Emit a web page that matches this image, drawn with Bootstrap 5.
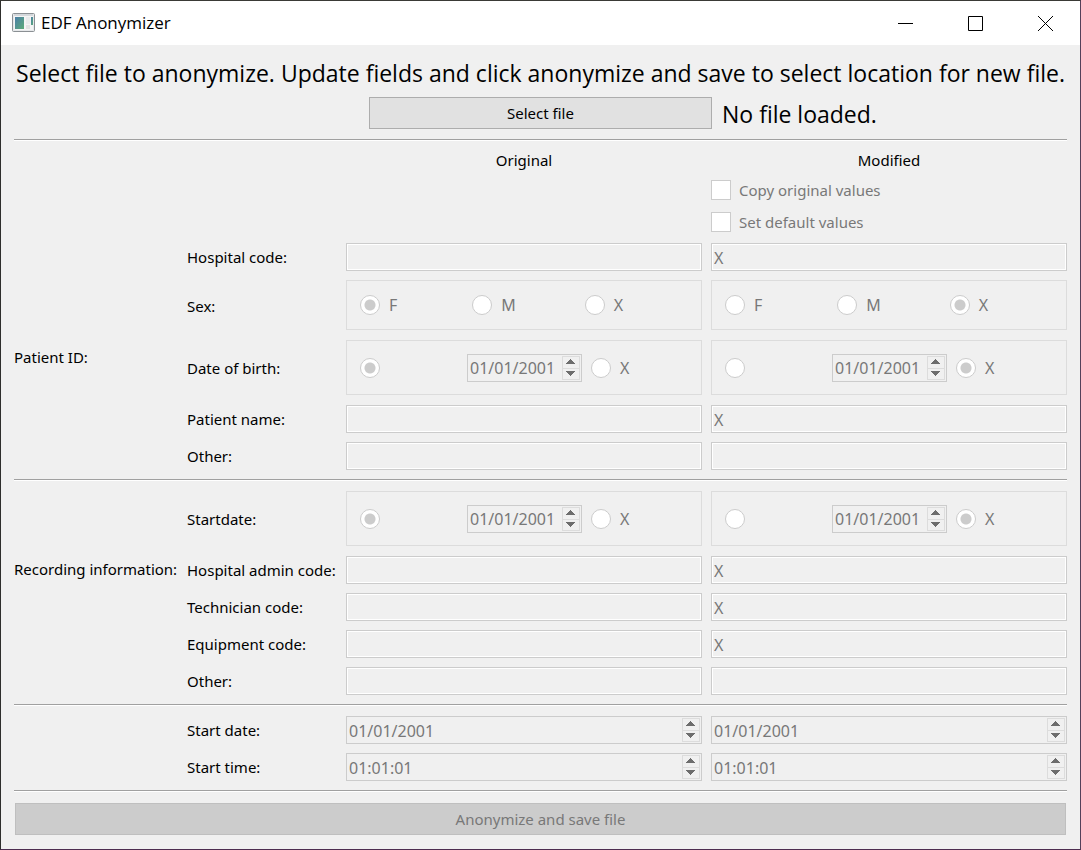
<!DOCTYPE html>
<html lang="en">
<head>
<meta charset="utf-8">
<meta name="viewport" content="width=device-width, initial-scale=1">
<title>EDF Anonymizer</title>
<link href="https://cdn.jsdelivr.net/npm/bootstrap@5.3.0/dist/css/bootstrap.min.css" rel="stylesheet">
<style>
  body { font: 15px/20px "Noto Sans", sans-serif; color: #000; background: #f0f0f0; }
  .app-window { border: 1px solid; border-color: #3a3a36 #54405a #4d2d50 #2e2e2c; }
  .title-bar { height: 44px; background: #fff; padding-left: 11px; }
  .title-text { font: 17px/24px "Open Sans", sans-serif; padding-left: 6px; }
  .win-btn { width: 70px; height: 44px; border: 0; padding: 0 0 2px; background: transparent; }
  .app-body { padding: 10px 13px 14px; }
  .intro { font: 23px/36px "Open Sans", sans-serif; margin-bottom: 6px; white-space: nowrap; }
  .file-state { font: 23px/34px "Open Sans", sans-serif; height: 32px; }
  .file-row { display: grid; grid-template-columns: repeat(3, 1fr); column-gap: 9px; margin-bottom: 10px; }
  .push-btn { height: 32px; padding: 0; border: 1px solid #adadad; border-radius: 0; background: #e1e1e1; color: #000; font-size: 15px; line-height: 20px; margin: 0 1px; }
  .save-row { padding-top: 11px; display: grid; }
  .push-btn:disabled { background: #ccc; border-color: #bfbfbf; color: #787878; opacity: 1; }
  .divider { height: 2px; margin: 0; border: 0; border-top: 1px solid #a0a0a0; background: #fff; opacity: 1; }
  .form-grid { display: grid; grid-template-columns: 164px 150px minmax(0, 1fr) minmax(0, 1fr); gap: 9px; align-items: center; padding: 10px 0 9px; white-space: nowrap; }
  .form-grid > .section-name { grid-column: 1; grid-row: 1 / span 5; }
  .form-grid > .patient-name { grid-row: 4 / span 5; }
  .form-grid > .recording-name { grid-row: 1 / span 4; padding-bottom: 12px; }
  .form-grid > .field-name { grid-column: 2; }
  .col-title { height: 19px; line-height: 19px; text-align: center; }
  .col-title.first { grid-column: 3; }
  .tick-row { grid-column: 4; height: 23px; padding-bottom: 2px; }
  .text-field { height: 28px; width: 100%; min-width: 0; border: 1px solid #ccc; border-radius: 0; box-shadow: inset 0 0 0 1px #fff; background: #f0f0f0; color: #787878; padding: 1px 2px 0; font-size: 16px; line-height: 22px; }
  .option-box { border: 1px solid #dcdcdc; margin-bottom: 1px; padding: 0 12px 0 13px; display: grid; align-items: center; }
  .sex-box { height: 50px; grid-template-columns: repeat(3, 1fr); padding-right: 4px; }
  .date-box { height: 55px; grid-template-columns: 1fr 115px 1fr; column-gap: 9px; }
  .mark-input { appearance: none; flex: none; width: 20px; height: 20px; margin: 0; border: 1px solid #ccc; background: #fff; }
  .mark-input[type=radio] { border-radius: 50%; }
  .mark-input[type=radio]:checked { background: radial-gradient(circle, #ccc 4px, #ccc 5px, #fff 6px); }
  .option-label { display: flex; align-items: center; gap: 9px; color: #787878; }
  .option-box .option-label { font-size: 16px; }
  .tick-row .option-label { gap: 8px; }
  .spin-field { display: flex; height: 28px; border: 1px solid #ccc; padding: 1px; }
  .spin-field input { flex: 1; min-width: 0; border: 0; background: transparent; color: #787878; padding: 1px 0 0 1px; font-size: 16px; line-height: 22px; }
  .spin-keys { display: flex; flex-direction: column; width: 18px; border: 1px solid #dcdcdc; }
  .spin-keys button { flex: 1; display: flex; align-items: center; justify-content: flex-start; border: 0; padding: 0 0 2px 3px; background: transparent; min-height: 0; }
  .spin-keys button + button { border-top: 1px solid #dcdcdc; padding-bottom: 1px; }
  .spin-keys svg { display: block; fill: #6d6d6d; }
</style>
</head>
<body>
<svg class="d-none" aria-hidden="true">
  <symbol id="up" viewBox="0 0 9 5"><path d="M4 0h1v1h1v1h1v1h1v1h1v1H0V4h1V3h1V2h1V1h1z"/></symbol>
  <symbol id="down" viewBox="0 0 9 5"><path d="M4 5h1V4h1V3h1V2h1V1h1V0H0v1h1v1h1v1h1v1h1z"/></symbol>
</svg>
<div class="app-window min-vh-100">
  <header class="title-bar d-flex align-items-center">
    <svg width="23" height="20" viewBox="0 0 23 20" aria-hidden="true">
      <defs><linearGradient id="pane" x1="0" y1="0" x2="1" y2="1"><stop offset="0" stop-color="#4b7fa8"/><stop offset="1" stop-color="#5cab78"/></linearGradient></defs>
      <rect x=".5" y=".5" width="22" height="18" rx="1" fill="#e6e8ea" stroke="#8b9094"/>
      <path d="M2 2h19" stroke="#c3c9ce"/>
      <rect x="2" y="3" width="19" height="14" fill="#f4f4f4"/>
      <rect x="3" y="4" width="9" height="12" fill="url(#pane)"/>
      <path d="M14 4h4v7h-4z" fill="#e9ebec"/><path d="M14 12h4v4h-4z" fill="#e2e2e2"/>
      <path d="M19 4h2v8h-2z" fill="url(#pane)"/>
    </svg>
    <span class="title-text flex-grow-1">EDF Anonymizer</span>
    <button class="win-btn" type="button" aria-label="Minimize"><svg width="15" height="15" viewBox="0 0 15 15"><path d="M0 7.500h15" stroke="#000"/></svg></button>
    <button class="win-btn" type="button" aria-label="Maximize"><svg width="15" height="15" viewBox="0 0 15 15"><path d="M.5.5h14v14H.5z" stroke="#000" fill="none"/></svg></button>
    <button class="win-btn" type="button" aria-label="Close"><svg width="15" height="15" viewBox="0 0 15 15"><path d="M0 0l15 15M15 0L0 15" stroke="#000"/></svg></button>
  </header>

  <main class="app-body">
    <p class="intro text-center">Select file to anonymize. Update fields and click anonymize and save to select location for new file.</p>
    <div class="file-row">
      <span></span>
      <button class="btn push-btn" type="button">Select file</button>
      <span class="file-state">No file loaded.</span>
    </div>
    <hr class="divider">

    <section class="form-grid">
      <div class="col-title first">Original</div>
      <div class="col-title">Modified</div>
      <div class="tick-row d-flex"><label class="option-label"><input class="mark-input" type="checkbox" disabled>Copy original values</label></div>
      <div class="tick-row d-flex"><label class="option-label"><input class="mark-input" type="checkbox" disabled>Set default values</label></div>

      <div class="section-name patient-name">Patient ID:</div>

      <label class="field-name" for="hosp">Hospital code:</label>
      <input class="text-field" id="hosp" type="text" disabled>
      <input class="text-field" type="text" value="X" aria-label="Modified hospital code" disabled>

      <div class="field-name">Sex:</div>
      <div class="option-box sex-box" role="radiogroup" aria-label="Original sex">
        <label class="option-label"><input class="mark-input" type="radio" name="sex-o" checked disabled>F</label>
        <label class="option-label"><input class="mark-input" type="radio" name="sex-o" disabled>M</label>
        <label class="option-label"><input class="mark-input" type="radio" name="sex-o" disabled>X</label>
      </div>
      <div class="option-box sex-box" role="radiogroup" aria-label="Modified sex">
        <label class="option-label"><input class="mark-input" type="radio" name="sex-m" disabled>F</label>
        <label class="option-label"><input class="mark-input" type="radio" name="sex-m" disabled>M</label>
        <label class="option-label"><input class="mark-input" type="radio" name="sex-m" checked disabled>X</label>
      </div>

      <label class="field-name" for="dob">Date of birth:</label>
      <div class="option-box date-box">
        <input class="mark-input" type="radio" name="dob-o" aria-label="Use date of birth" checked disabled>
        <div class="spin-field"><input id="dob" type="text" value="01/01/2001" disabled><span class="spin-keys"><button type="button" aria-label="Increase" disabled><svg width="9" height="5"><use href="#up"/></svg></button><button type="button" aria-label="Decrease" disabled><svg width="9" height="5"><use href="#down"/></svg></button></span></div>
        <label class="option-label"><input class="mark-input" type="radio" name="dob-o" disabled>X</label>
      </div>
      <div class="option-box date-box">
        <input class="mark-input" type="radio" name="dob-m" aria-label="Use modified date of birth" disabled>
        <div class="spin-field"><input type="text" value="01/01/2001" aria-label="Modified date of birth" disabled><span class="spin-keys"><button type="button" aria-label="Increase" disabled><svg width="9" height="5"><use href="#up"/></svg></button><button type="button" aria-label="Decrease" disabled><svg width="9" height="5"><use href="#down"/></svg></button></span></div>
        <label class="option-label"><input class="mark-input" type="radio" name="dob-m" checked disabled>X</label>
      </div>

      <label class="field-name" for="pname">Patient name:</label>
      <input class="text-field" id="pname" type="text" disabled>
      <input class="text-field" type="text" value="X" aria-label="Modified patient name" disabled>

      <label class="field-name" for="pother">Other:</label>
      <input class="text-field" id="pother" type="text" disabled>
      <input class="text-field" type="text" aria-label="Modified other patient information" disabled>
    </section>
    <hr class="divider">

    <section class="form-grid">
      <div class="section-name recording-name">Recording information:</div>

      <label class="field-name" for="rdate">Startdate:</label>
      <div class="option-box date-box">
        <input class="mark-input" type="radio" name="rd-o" aria-label="Use startdate" checked disabled>
        <div class="spin-field"><input id="rdate" type="text" value="01/01/2001" disabled><span class="spin-keys"><button type="button" aria-label="Increase" disabled><svg width="9" height="5"><use href="#up"/></svg></button><button type="button" aria-label="Decrease" disabled><svg width="9" height="5"><use href="#down"/></svg></button></span></div>
        <label class="option-label"><input class="mark-input" type="radio" name="rd-o" disabled>X</label>
      </div>
      <div class="option-box date-box">
        <input class="mark-input" type="radio" name="rd-m" aria-label="Use modified startdate" disabled>
        <div class="spin-field"><input type="text" value="01/01/2001" aria-label="Modified startdate" disabled><span class="spin-keys"><button type="button" aria-label="Increase" disabled><svg width="9" height="5"><use href="#up"/></svg></button><button type="button" aria-label="Decrease" disabled><svg width="9" height="5"><use href="#down"/></svg></button></span></div>
        <label class="option-label"><input class="mark-input" type="radio" name="rd-m" checked disabled>X</label>
      </div>

      <label class="field-name" for="admin">Hospital admin code:</label>
      <input class="text-field" id="admin" type="text" disabled>
      <input class="text-field" type="text" value="X" aria-label="Modified hospital admin code" disabled>

      <label class="field-name" for="tech">Technician code:</label>
      <input class="text-field" id="tech" type="text" disabled>
      <input class="text-field" type="text" value="X" aria-label="Modified technician code" disabled>

      <label class="field-name" for="equip">Equipment code:</label>
      <input class="text-field" id="equip" type="text" disabled>
      <input class="text-field" type="text" value="X" aria-label="Modified equipment code" disabled>

      <label class="field-name" for="rother">Other:</label>
      <input class="text-field" id="rother" type="text" disabled>
      <input class="text-field" type="text" aria-label="Modified other recording information" disabled>
    </section>
    <hr class="divider">

    <section class="form-grid">
      <label class="field-name" for="sdate">Start date:</label>
      <div class="spin-field"><input id="sdate" type="text" value="01/01/2001" disabled><span class="spin-keys"><button type="button" aria-label="Increase" disabled><svg width="9" height="5"><use href="#up"/></svg></button><button type="button" aria-label="Decrease" disabled><svg width="9" height="5"><use href="#down"/></svg></button></span></div>
      <div class="spin-field"><input type="text" value="01/01/2001" aria-label="Modified start date" disabled><span class="spin-keys"><button type="button" aria-label="Increase" disabled><svg width="9" height="5"><use href="#up"/></svg></button><button type="button" aria-label="Decrease" disabled><svg width="9" height="5"><use href="#down"/></svg></button></span></div>

      <label class="field-name" for="stime">Start time:</label>
      <div class="spin-field"><input id="stime" type="text" value="01:01:01" disabled><span class="spin-keys"><button type="button" aria-label="Increase" disabled><svg width="9" height="5"><use href="#up"/></svg></button><button type="button" aria-label="Decrease" disabled><svg width="9" height="5"><use href="#down"/></svg></button></span></div>
      <div class="spin-field"><input type="text" value="01:01:01" aria-label="Modified start time" disabled><span class="spin-keys"><button type="button" aria-label="Increase" disabled><svg width="9" height="5"><use href="#up"/></svg></button><button type="button" aria-label="Decrease" disabled><svg width="9" height="5"><use href="#down"/></svg></button></span></div>
    </section>
    <hr class="divider">

    <div class="save-row">
      <button class="btn push-btn" type="button" disabled>Anonymize and save file</button>
    </div>
  </main>
</div>
<script src="https://cdn.jsdelivr.net/npm/bootstrap@5.3.0/dist/js/bootstrap.bundle.min.js"></script>
</body>
</html>
